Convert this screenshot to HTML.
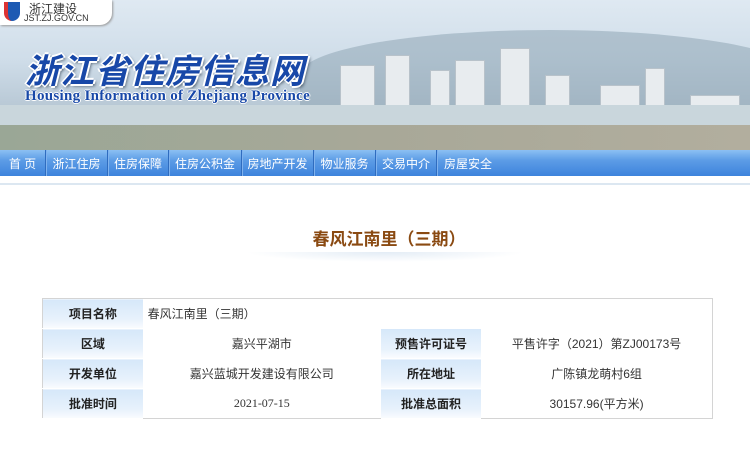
<!DOCTYPE html>
<html><head><meta charset="utf-8"><style>
*{margin:0;padding:0;box-sizing:border-box}
body{width:750px;height:450px;overflow:hidden;background:#fff;font-family:"Liberation Sans","Noto Sans CJK SC",sans-serif;position:relative}
.hdr{position:absolute;left:0;top:0;width:750px;height:150px;background:linear-gradient(180deg,#dfe9f2 0%,#cfdde9 40%,#b9c9d6 70%,#a9b6bc 100%);overflow:hidden}
.mtn{position:absolute;left:300px;top:30px;width:500px;height:90px;background:#8fa5b5;border-radius:50% 50% 0 0;opacity:.55}
.b{position:absolute;background:#e8ecef;border:1px solid #b8c2ca}
.river{position:absolute;left:0;top:105px;width:750px;height:22px;background:#c9d6dc}
.ground{position:absolute;left:0;top:125px;width:750px;height:25px;background:linear-gradient(90deg,#9aa796,#a8a898 50%,#b2ae9e)}
.tab{position:absolute;left:0;top:0;width:112px;height:25px;background:#fff;border-radius:0 0 12px 0;box-shadow:1px 1px 2px #999}
.tab .l{position:absolute;left:4px;top:2px;width:16px;height:19px;background:#1d5ab3;border-radius:0 0 8px 8px;border-left:4px solid #d33}
.tab .t1{position:absolute;left:29px;top:0;font-size:12px;color:#333}
.tab .t2{position:absolute;left:24px;top:13px;font-size:9px;color:#333}
.tt{position:absolute;left:25px;top:44px;font-size:34px;font-weight:bold;font-style:italic;color:#1848a8;letter-spacing:1px;text-shadow:2px 0 #fff,-2px 0 #fff,0 2px #fff,0 -2px #fff,2px 2px 3px #456}
.en{position:absolute;left:25px;top:88px;font-family:"Liberation Serif",serif;font-size:15px;font-weight:bold;color:#1848a8;letter-spacing:.3px;text-shadow:1px 0 #fff,-1px 0 #fff,0 1px #fff,0 -1px #fff}
.nav{position:absolute;left:0;top:150px;width:750px;height:26px;background:linear-gradient(180deg,#8cc0f3 0%,#5c9ce6 40%,#3d83dc 100%)}
.nav span{position:absolute;top:0;color:#fff;font-size:12px;line-height:28px;text-align:center;border-right:1px solid #2f6cbf;box-shadow:1px 0 #7fb2ee;height:26px}
.line{position:absolute;left:0;top:183px;width:750px;height:2px;background:#dce7f1}
h1{position:absolute;left:14px;width:750px;top:225px;text-align:center;font-size:17px;color:#8a4a12;font-weight:bold}
.sh{position:absolute;left:245px;top:252px;width:280px;height:10px;background:radial-gradient(ellipse at center top,#e3ecf5,#fff 70%)}
table{position:absolute;left:42px;top:298px;width:671px;table-layout:fixed;border-collapse:collapse;border:1px solid #d4d4d4;font-size:12px;color:#333}
td{height:30px;text-align:center}
td.k{font-weight:bold;color:#222;background:linear-gradient(180deg,#d6e8fa,#e8f2fc 70%,#fafcff);border-bottom:1px solid #fff}
</style></head><body>
<div class="hdr">
<div class="mtn"></div>
<div class="b" style="left:340px;top:65px;width:35px;height:60px"></div>
<div class="b" style="left:385px;top:55px;width:25px;height:70px"></div>
<div class="b" style="left:430px;top:70px;width:20px;height:55px"></div>
<div class="b" style="left:455px;top:60px;width:30px;height:65px"></div>
<div class="b" style="left:500px;top:48px;width:30px;height:77px"></div>
<div class="b" style="left:545px;top:75px;width:25px;height:50px"></div>
<div class="b" style="left:600px;top:85px;width:40px;height:40px"></div>
<div class="b" style="left:645px;top:68px;width:20px;height:57px"></div>
<div class="b" style="left:690px;top:95px;width:50px;height:30px"></div>
<div class="river"></div><div class="ground"></div>
<div class="tab"><div class="l"></div><div class="t1">浙江建设</div><div class="t2">JST.ZJ.GOV.CN</div></div>
<div class="tt">浙江省住房信息网</div>
<div class="en">Housing Information of Zhejiang Province</div>
</div>
<div class="nav">
<span style="left:0;width:46px">首 页</span>
<span style="left:46px;width:62px">浙江住房</span>
<span style="left:108px;width:61px">住房保障</span>
<span style="left:169px;width:73px">住房公积金</span>
<span style="left:242px;width:72px">房地产开发</span>
<span style="left:314px;width:62px">物业服务</span>
<span style="left:376px;width:61px">交易中介</span>
<span style="left:437px;width:62px;border:0;box-shadow:none">房屋安全</span>
</div>
<div class="line"></div>
<h1>春风江南里（三期）</h1>
<div class="sh"></div>
<table>
<colgroup><col style="width:100px"><col style="width:238px"><col style="width:100px"><col style="width:231px"></colgroup>
<tr><td class="k">项目名称</td><td colspan="3" style="text-align:left;padding-left:5px">春风江南里（三期）</td></tr>
<tr><td class="k">区域</td><td>嘉兴平湖市</td><td class="k">预售许可证号</td><td>平售许字（2021）第ZJ00173号</td></tr>
<tr><td class="k">开发单位</td><td>嘉兴蓝城开发建设有限公司</td><td class="k">所在地址</td><td>广陈镇龙萌村6组</td></tr>
<tr><td class="k">批准时间</td><td style="font-family:'Liberation Serif',serif">2021-07-15</td><td class="k">批准总面积</td><td>30157.96(平方米)</td></tr>
</table>
</body></html>
